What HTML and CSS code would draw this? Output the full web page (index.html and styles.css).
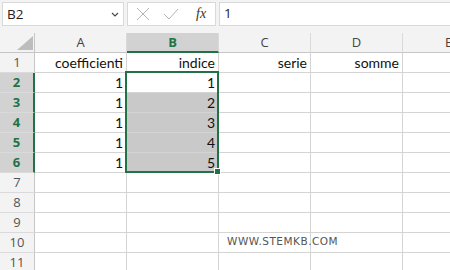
FILE: index.html
```html
<!DOCTYPE html>
<html>
<head>
<meta charset="utf-8">
<link rel="stylesheet" href="styles.css">
</head>
<body>
<div class="app">
  <div class="topbar">
    <div class="namebox">
      <span class="name">B2</span>
      <svg class="chev" width="8" height="5" viewBox="0 0 8 5"><path d="M1 1 L4 4 L7 1" fill="none" stroke="#444" stroke-width="1.1"/></svg>
    </div>
    <div class="fbtns">
      <svg class="ico" width="14" height="14" viewBox="0 0 14 14"><path d="M1 1 L13 13 M13 1 L1 13" stroke="#b4b4b4" stroke-width="1"/></svg>
      <svg class="ico" width="16" height="14" viewBox="0 0 16 14"><path d="M1 7 L6 12 L15 2" fill="none" stroke="#b4b4b4" stroke-width="1"/></svg>
      <span class="fx">fx</span>
    </div>
    <div class="finput">1</div>
  </div>
  <div class="sheet">
    <div class="corner"><span class="tri"></span></div>
    <div class="ch">A</div>
    <div class="ch sel">B</div>
    <div class="ch">C</div>
    <div class="ch">D</div>
    <div class="ch">E</div>

    <div class="rh">1</div>
    <div class="c r">coefficienti</div>
    <div class="c r">indice</div>
    <div class="c r">serie</div>
    <div class="c r">somme</div>
    <div class="c"></div>

    <div class="rh sel">2</div>
    <div class="c r">1</div>
    <div class="c r">1</div>
    <div class="c"></div><div class="c"></div><div class="c"></div>

    <div class="rh sel">3</div>
    <div class="c r">1</div>
    <div class="c r hl">2</div>
    <div class="c"></div><div class="c"></div><div class="c"></div>

    <div class="rh sel">4</div>
    <div class="c r">1</div>
    <div class="c r hl">3</div>
    <div class="c"></div><div class="c"></div><div class="c"></div>

    <div class="rh sel">5</div>
    <div class="c r">1</div>
    <div class="c r hl">4</div>
    <div class="c"></div><div class="c"></div><div class="c"></div>

    <div class="rh sel">6</div>
    <div class="c r">1</div>
    <div class="c r hl">5</div>
    <div class="c"></div><div class="c"></div><div class="c"></div>

    <div class="rh">7</div>
    <div class="c"></div><div class="c"></div><div class="c"></div><div class="c"></div><div class="c"></div>
    <div class="rh">8</div>
    <div class="c"></div><div class="c"></div><div class="c"></div><div class="c"></div><div class="c"></div>
    <div class="rh">9</div>
    <div class="c"></div><div class="c"></div><div class="c"></div><div class="c"></div><div class="c"></div>
    <div class="rh">10</div>
    <div class="c"></div><div class="c"></div><div class="c"></div><div class="c"></div><div class="c"></div>
    <div class="rh">11</div>
    <div class="c"></div><div class="c"></div><div class="c"></div><div class="c"></div><div class="c"></div>

    <div class="selection"><span class="handle"></span></div>
    <div class="watermark">WWW.STEMKB.COM</div>
  </div>
</div>
</body>
</html>
```
FILE: styles.css
```css
html, body {
  margin: 0;
  padding: 0;
  background: #ffffff;
}
.app {
  width: 450px;
  height: 270px;
  overflow: hidden;
  font-family: "Open Sans", "Noto Sans", sans-serif;
}
.topbar {
  height: 33px;
  box-sizing: border-box;
  background: #f3f3f3;
  padding: 2px 0 0 2px;
  display: flex;
  align-items: flex-start;
  gap: 3px;
}
.namebox {
  width: 122px;
  height: 24px;
  box-sizing: border-box;
  border: 1px solid #d9d9d9;
  background: #fff;
  display: flex;
  align-items: center;
  justify-content: space-between;
  padding: 0 4px 0 4px;
}
.name {
  font-size: 13.5px;
  color: #222;
}
.chev {
  margin-top: 1px;
}
.fbtns {
  width: 89px;
  height: 24px;
  box-sizing: border-box;
  border: 1px solid #d9d9d9;
  background: #fff;
  display: flex;
  align-items: center;
  padding-left: 8px;
  gap: 13px;
}
.fx {
  font-family: "Liberation Serif", serif;
  font-style: italic;
  font-size: 14px;
  color: #333;
  margin-left: 4px;
}
.finput {
  flex: 1;
  height: 24px;
  box-sizing: border-box;
  border: 1px solid #d9d9d9;
  border-right: none;
  background: #fff;
  font-size: 13.5px;
  color: #222;
  padding-left: 4px;
  line-height: 21px;
}
.sheet {
  position: relative;
  display: grid;
  grid-template-columns: 35px repeat(5, 92px);
  grid-template-rows: repeat(12, 20px);
}
.corner {
  background: #f3f3f3;
  border-right: 1px solid #c6c6c6;
  border-bottom: 1px solid #c6c6c6;
  box-sizing: border-box;
  position: relative;
}
.tri {
  position: absolute;
  right: 1px;
  bottom: 2px;
  width: 0;
  height: 0;
  border-left: 16px solid transparent;
  border-bottom: 14px solid #bdbdbd;
}
.ch {
  background: #f3f3f3;
  border-right: 1px solid #dadada;
  border-bottom: 1px solid #c6c6c6;
  box-sizing: border-box;
  text-align: center;
  font-size: 13px;
  line-height: 19px;
  color: #444;
}
.ch.sel {
  background: #d2d2d2;
  color: #217346;
  font-weight: bold;
  border-bottom: 2px solid #217346;
  line-height: 18px;
}
.rh {
  background: #f3f3f3;
  border-right: 1px solid #c6c6c6;
  border-bottom: 1px solid #dadada;
  box-sizing: border-box;
  text-align: center;
  font-size: 13px;
  line-height: 19px;
  color: #555;
}
.rh.sel {
  background: #d2d2d2;
  color: #217346;
  font-weight: bold;
  border-right: 2px solid #217346;
}
.c {
  border-right: 1px solid #d4d4d4;
  border-bottom: 1px solid #d4d4d4;
  box-sizing: border-box;
  font-family: "Lato", "Open Sans", sans-serif;
  font-size: 14px;
  line-height: 19px;
  color: #111;
  padding: 0 3px;
  white-space: nowrap;
  overflow: visible;
}
.c.r {
  text-align: right;
}
.c.hl {
  background: #c9c9c9;
}
.selection {
  position: absolute;
  left: 125px;
  top: 38px;
  width: 94px;
  height: 102px;
  box-sizing: border-box;
  border: 2px solid #217346;
}
.handle {
  position: absolute;
  right: -4px;
  bottom: -4px;
  width: 5px;
  height: 5px;
  background: #217346;
  border: 1px solid #fff;
}
.watermark {
  position: absolute;
  left: 227px;
  top: 202px;
  font-family: "DejaVu Sans", sans-serif;
  font-size: 10.5px;
  letter-spacing: 0.5px;
  color: #555;
}
```
